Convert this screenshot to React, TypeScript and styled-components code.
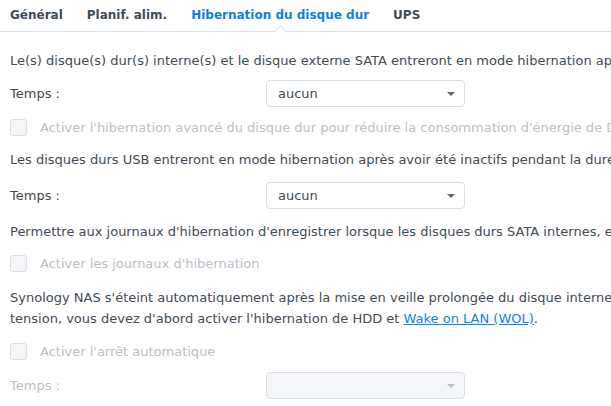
import React from "react";
import styled, { createGlobalStyle } from "styled-components";

const GlobalStyle = createGlobalStyle`
  html, body { margin: 0; padding: 0; background: #ffffff; overflow: hidden; }
  body { font-family: "DejaVu Sans", Verdana, sans-serif; }
`;

const Page = styled.div`
  width: 611px;
  height: 406px;
  overflow: hidden;
  background: #fff;
  color: #414b55;
  font-size: 13px;
`;

const TabBar = styled.div`
  position: relative;
  display: flex;
  gap: 24px;
  height: 32px;
  padding: 0 10px;
  border-bottom: 1px solid #d6e1eb;
  box-sizing: border-box;
  width: 1000px;
`;

const Tab = styled.div<{ $active?: boolean }>`
  position: relative;
  font-size: 12px;
  font-weight: bold;
  line-height: 30px;
  color: ${(p) => (p.$active ? "#0a7fe6" : "#414b55")};
  white-space: nowrap;
`;

const Caret = styled.span`
  position: absolute;
  left: 50%;
  bottom: -5px;
  width: 8px;
  height: 8px;
  margin-left: -4px;
  background: #fff;
  border-left: 1px solid #d6e1eb;
  border-top: 1px solid #d6e1eb;
  transform: rotate(45deg);
`;

const Content = styled.div`
  width: 1100px;
  padding: 0 10px;
  display: flex;
  flex-direction: column;
`;

const Desc = styled.div<{ $mt: number }>`
  margin-top: ${(p) => p.$mt}px;
  line-height: 21px;
  white-space: nowrap;
`;

const Link = styled.a`
  color: #0a84e8;
  text-decoration: underline;
`;

const FieldRow = styled.div<{ $mt: number }>`
  margin-top: ${(p) => p.$mt}px;
  display: flex;
  align-items: center;
  height: 27px;
`;

const Label = styled.div<{ $disabled?: boolean }>`
  width: 256px;
  color: ${(p) => (p.$disabled ? "#b9c1c9" : "#414b55")};
`;

const Select = styled.div<{ $disabled?: boolean }>`
  width: 199px;
  height: 27px;
  box-sizing: border-box;
  border: 1px solid #d8e0e7;
  border-radius: 4px;
  background: ${(p) => (p.$disabled ? "#f3f5f8" : "#fff")};
  display: flex;
  align-items: center;
  justify-content: space-between;
  padding: 0 9px 0 11px;
  color: #414b55;
`;

const Arrow = styled.span<{ $disabled?: boolean }>`
  width: 0;
  height: 0;
  border-left: 4px solid transparent;
  border-right: 4px solid transparent;
  border-top: 4px solid ${(p) => (p.$disabled ? "#b9c1c9" : "#5f6a74")};
`;

const CheckRow = styled.div<{ $mt: number }>`
  margin-top: ${(p) => p.$mt}px;
  display: flex;
  align-items: center;
  gap: 13px;
  height: 20px;
  white-space: nowrap;
  color: #b9c1c9;
`;

const Box = styled.span`
  width: 17px;
  height: 17px;
  box-sizing: border-box;
  border: 1px solid #d8e0e7;
  border-radius: 3px;
  background: #f3f5f8;
  flex: none;
`;

export default function App() {
  return (
    <Page>
      <GlobalStyle />
      <TabBar>
        <Tab>Général</Tab>
        <Tab>Planif. alim.</Tab>
        <Tab $active>
          Hibernation du disque dur
          <Caret />
        </Tab>
        <Tab>UPS</Tab>
      </TabBar>
      <Content>
        <Desc $mt={18}>
          Le(s) disque(s) dur(s) interne(s) et le disque externe SATA entreront en mode hibernation après avoir été inactifs pendant la durée spécifiée.
        </Desc>
        <FieldRow $mt={9}>
          <Label>Temps :</Label>
          <Select>
            aucun
            <Arrow />
          </Select>
        </FieldRow>
        <CheckRow $mt={10}>
          <Box />
          Activer l'hibernation avancé du disque dur pour réduire la consommation d'énergie de DiskStation
        </CheckRow>
        <Desc $mt={12}>
          Les disques durs USB entreront en mode hibernation après avoir été inactifs pendant la durée spécifiée.
        </Desc>
        <FieldRow $mt={12}>
          <Label>Temps :</Label>
          <Select>
            aucun
            <Arrow />
          </Select>
        </FieldRow>
        <Desc $mt={12}>
          Permettre aux journaux d'hibernation d'enregistrer lorsque les disques durs SATA internes, externes et USB entrent en mode hibernation.
        </Desc>
        <CheckRow $mt={11}>
          <Box />
          Activer les journaux d'hibernation
        </CheckRow>
        <Desc $mt={14}>
          Synology NAS s'éteint automatiquement après la mise en veille prolongée du disque interne. Pour le réveiller ou le mettre sous
          <br />
          tension, vous devez d'abord activer l'hibernation de HDD et <Link>Wake on LAN (WOL)</Link>.
        </Desc>
        <CheckRow $mt={12}>
          <Box />
          Activer l'arrêt automatique
        </CheckRow>
        <FieldRow $mt={11}>
          <Label $disabled>Temps :</Label>
          <Select $disabled>
            <span />
            <Arrow $disabled />
          </Select>
        </FieldRow>
      </Content>
    </Page>
  );
}
